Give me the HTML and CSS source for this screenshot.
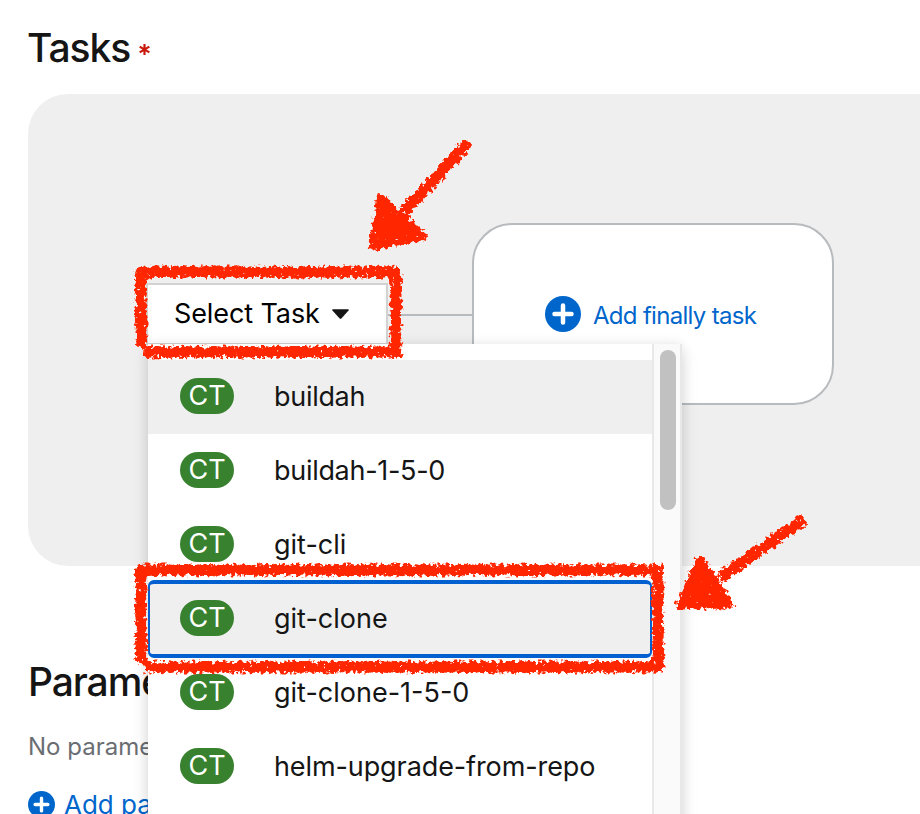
FILE: index.html
```html
<!DOCTYPE html>
<html lang="en">
<head>
<meta charset="utf-8">
<title>Pipeline builder</title>
<link rel="stylesheet" href="styles.css">
</head>
<body>
<main class="page">
  <h2 class="heading">Tasks<svg class="required" viewBox="0 0 10 10"><path d="M5 0v10M.6 2.4l8.8 5.2M.6 7.6l8.8-5.2"/></svg></h2>
  <section class="graph">
    <div class="edge"></div>
    <div class="node task-node"><span class="task-label">Select Task</span><svg class="caret" viewBox="0 0 16 9"><path d="M1 0h14q1.5 0 .6 1.2L9 8.4q-1 1-2 0L.4 1.2Q-.5 0 1 0z"/></svg></div>
    <div class="node finally-node">
      <svg class="plus" viewBox="0 0 36 36"><circle cx="18" cy="18" r="18"/><path d="M18 9.5v17M9.5 18h17"/></svg>
      <span class="finally-label">Add finally task</span>
    </div>
  </section>
  <h2 class="heading params">Parame</h2>
  <p class="empty">No parame</p>
  <a class="add"><svg class="plus small" viewBox="0 0 36 36"><circle cx="18" cy="18" r="18"/><path d="M18 9.5v17M9.5 18h17"/></svg><span>Add pa</span></a>
</main>
<div class="menu">
  <ul class="list">
    <li class="item hover"><span class="badge">CT</span><span class="name n1">buildah</span></li>
    <li class="item"><span class="badge">CT</span><span class="name n2">buildah-1-5-0</span></li>
    <li class="item"><span class="badge">CT</span><span class="name n3">git-cli</span></li>
    <li class="item hover focused"><span class="badge">CT</span><span class="name n4">git-clone</span></li>
    <li class="item"><span class="badge">CT</span><span class="name n5">git-clone-1-5-0</span></li>
    <li class="item"><span class="badge">CT</span><span class="name n6">helm-upgrade-from-repo</span></li>
  </ul>
  <div class="track"><div class="thumb"></div></div>
</div>
<svg class="marks" viewBox="0 0 920 814">
  <defs>
    <filter id="crayon" filterUnits="userSpaceOnUse" x="0" y="0" width="920" height="814" color-interpolation-filters="sRGB">
      <feMorphology in="SourceAlpha" operator="dilate" radius="2" result="limit"/>
      <feGaussianBlur in="SourceGraphic" stdDeviation="2" result="soft"/>
      <feTurbulence type="fractalNoise" baseFrequency="0.26" numOctaves="3" seed="4" result="noise"/>
      <feComposite in="soft" in2="noise" operator="arithmetic" k2="1.2" k3="2" k4="-1" result="mix"/>
      <feColorMatrix in="mix" type="matrix" values="0 0 0 0 1  0 0 0 0 0.15  0 0 0 0 0  0 0 0 5 -2.4" result="wax"/>
      <feComposite in="wax" in2="limit" operator="in"/>
    </filter>
  </defs>
  <g class="crayon" filter="url(#crayon)">
    <path d="M141 268V348M137 272H398M396 270V355M145 352H401"/>
    <path d="M141 566V663M137 570H661M658 566V671M145 667H661"/>
    <path d="M468 143L404 212"/>
    <path class="head" d="M381 198L423 236L373 246Z"/>
    <path d="M804 519L720 578"/>
    <path class="head" d="M700 559L730 605L680 605Z"/>
  </g>
</svg>
</body>
</html>
```
FILE: styles.css
```css
* { box-sizing: border-box; }
body {
  margin: 0;
  width: 920px;
  height: 814px;
  overflow: hidden;
  position: relative;
  background: #fff;
  color: #151515;
  font-family: Inter, "Liberation Sans", sans-serif;
  font-weight: 390;
}
.page { height: 814px; overflow: hidden; padding: 24px 0 0 28px; }
.heading { margin: 0; height: 48px; line-height: 48px; font-size: 39px; font-weight: 500; letter-spacing: -1.1px; }
.heading:first-child { margin-left: -1px; }
.required { width: 11px; height: 11px; margin-left: 9px; vertical-align: 7px; fill: none; stroke: #c9190b; stroke-width: 2; }
.graph { position: relative; height: 472px; margin-top: 22px; background: #efefef; border-radius: 40px 0 0 40px; }
.node { position: absolute; display: flex; align-items: center; background: #fff; }
.edge { position: absolute; left: 360px; top: 220px; width: 84px; height: 2px; background: #b8bbbe; }
.task-node { left: 118px; top: 189px; width: 242px; height: 62px; padding-left: 26px; border: 2px solid #d2d2d2; color: #000; font-size: 27px; }
.task-label { width: 146px; margin-top: -2px; letter-spacing: -0.1px; white-space: nowrap; }
.caret { width: 17px; height: 10px; margin-left: 12px; fill: #151515; }
.finally-node { left: 444px; top: 129px; width: 362px; height: 182px; padding-left: 71px; border: 2px solid #b8bbbe; border-radius: 40px; color: #06c; font-size: 24px; }
.finally-label { margin: 3px 0 0 12px; letter-spacing: -0.7px; white-space: nowrap; }
.plus { width: 36px; height: 36px; fill: #06c; stroke: none; flex: none; }
.plus path { stroke: #fff; stroke-width: 4.5; stroke-linecap: round; }
.plus.small { width: 27px; height: 27px; }
.params { margin-top: 92px; }
.empty { margin: 23px 0 0; height: 36px; line-height: 36px; color: #6a6e73; font-size: 24px; white-space: nowrap; }
.add { display: flex; align-items: center; gap: 9px; height: 36px; margin-top: 21px; color: #06c; font-size: 26px; }
.menu { position: absolute; left: 148px; top: 344px; width: 534px; height: 490px; display: flex; background: #fff; box-shadow: 0 8px 16px rgba(3,3,3,.12), 0 0 12px rgba(3,3,3,.08); }
.list { width: 504px; margin: 0; padding: 16px 0; list-style: none; }
.item { display: flex; align-items: center; height: 74px; padding: 0 0 2px 32px; gap: 40px; font-size: 27px; }
.hover { background: #efefef; }
.focused { position: relative; }
.focused::after { content: ""; position: absolute; inset: -2px 0 -2px 0; border: solid #0060d0; border-width: 4px 2px; border-radius: 6px; }
.badge { width: 54px; height: 36px; border-radius: 18px; background: #38812f; color: #fff; text-align: center; font-size: 27px; line-height: 36px; font-weight: 400; }
.name { line-height: 36px; margin-top: 2px; white-space: nowrap; }
.n1 { letter-spacing: -0.3px; }
.n2 { letter-spacing: -0.3px; }
.n6 { letter-spacing: -0.1px; }
.track { width: 30px; padding: 6px 0 0 6px; background: #fafafa; border: solid #e8e8e8; border-width: 0 2px; }
.thumb { width: 16px; height: 160px; border-radius: 8px; background: #c1c1c1; }
.marks { position: absolute; inset: 0; width: 920px; height: 814px; pointer-events: none; }
.crayon { fill: none; stroke: #ff2600; stroke-width: 11; stroke-linejoin: round; }
.crayon .head { fill: #ff2600; stroke-width: 8; }
```
